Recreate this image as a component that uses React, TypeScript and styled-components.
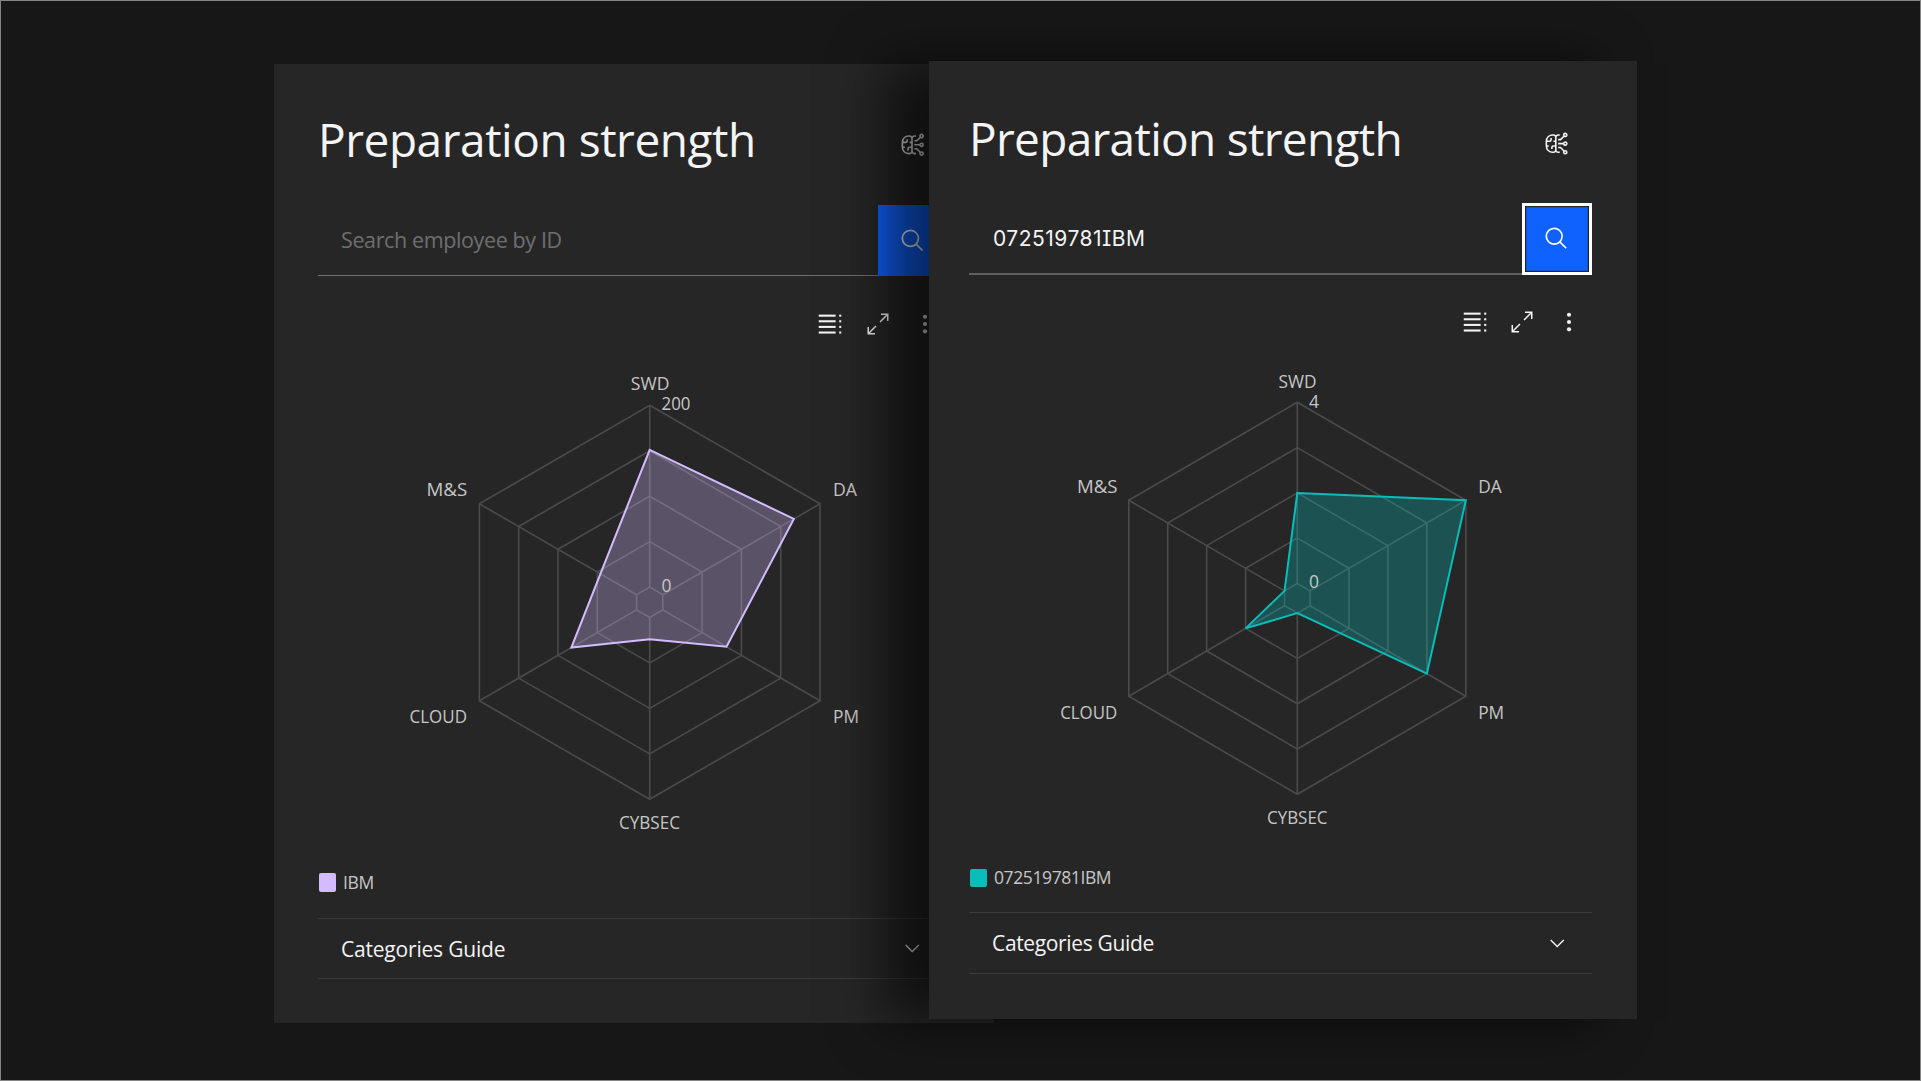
import React from "react";
import styled, { createGlobalStyle } from "styled-components";

const GlobalStyle = createGlobalStyle`
  * { box-sizing: border-box; }
  body { margin: 0; background: #171717; }
  h1 { margin: 0; }
`;

const sans = `"Open Sans", "Noto Sans", sans-serif`;

interface Metrics {
  top: number;
  width: number;
  height: number;
  padLeft: number;
  content: number;
  headerHeight: number;
  titleTop: number;
  titleSpacing: string;
  searchHeight: number;
  searchLine: string;
  buttonWidth: number;
  toolbarHeight: number;
  toolbarWidth: number;
  toolWidth: number;
  chartHeight: number;
  legendHeight: number;
  swatchHeight: number;
  guideHeight: number;
  guideSpacing: string;
  icon: number;
}

interface ChartData {
  cx: number;
  cy: number;
  rx: number;
  ry: number;
  hole: number;
  max: number;
  values: number[];
  labelSize: number;
  labels: Label[];
}

interface Label {
  text: string;
  x: number;
  y: number;
  width: number;
}

const Page = styled.main`
  width: 1921px;
  height: 1081px;
  padding-left: 273px;
  border: 1px solid #858585;
  background: #171717;
  display: flex;
  align-items: flex-start;
  overflow: hidden;
  font-family: ${sans};
`;

const Card = styled.section<{ $m: Metrics; $front?: boolean }>`
  flex: none;
  display: flex;
  flex-direction: column;
  width: ${(p) => p.$m.width}px;
  height: ${(p) => p.$m.height}px;
  margin-top: ${(p) => p.$m.top - 1}px;
  margin-left: ${(p) => (p.$front ? "-65px" : "0")};
  padding-left: ${(p) => p.$m.padLeft}px;
  background: #262626;
  z-index: ${(p) => (p.$front ? 1 : 0)};
  box-shadow: ${(p) => (p.$front ? "-44px 2px 50px rgba(0, 0, 0, 0.6)" : "none")};
`;

const Header = styled.header<{ $m: Metrics }>`
  display: flex;
  justify-content: space-between;
  width: ${(p) => p.$m.content}px;
  height: ${(p) => p.$m.headerHeight}px;
  padding-top: ${(p) => p.$m.titleTop}px;
`;

const Title = styled.h1<{ $m: Metrics }>`
  color: #f4f4f4;
  font-size: 46px;
  line-height: 64px;
  font-weight: 450;
  letter-spacing: ${(p) => p.$m.titleSpacing};
  white-space: nowrap;
`;

const HeaderIcon = styled.span<{ $m: Metrics }>`
  display: flex;
  justify-content: center;
  width: ${(p) => p.$m.buttonWidth}px;
  padding-top: 25px;
  color: #f4f4f4;
`;

const Search = styled.div<{ $m: Metrics }>`
  display: flex;
  width: ${(p) => p.$m.content}px;
  height: ${(p) => p.$m.searchHeight}px;
`;

const Field = styled.div<{ $m: Metrics }>`
  flex: 1;
  display: flex;
  align-items: center;
  padding-left: 23px;
  border-bottom: ${(p) => p.$m.searchLine};
`;

const Placeholder = styled.span`
  padding-bottom: 2px;
  color: #6f6f6f;
  font-size: 21.5px;
  font-weight: 450;
  letter-spacing: -0.38px;
`;

const Value = styled.span`
  padding-left: 1px;
  color: #f4f4f4;
  font-family: Inter, ${sans};
  font-feature-settings: "cv08" 1;
  font-size: 21px;
  letter-spacing: 0.5px;
`;

const SearchButton = styled.button<{ $m: Metrics; $focused?: boolean }>`
  display: flex;
  align-items: center;
  justify-content: center;
  width: ${(p) => p.$m.buttonWidth}px;
  padding: 0;
  border: ${(p) => (p.$focused ? "3px solid #ffffff" : "0")};
  box-shadow: ${(p) => (p.$focused ? "inset 0 0 0 1.3px #262626" : "none")};
  background: #0f62fe;
  color: #ffffff;
`;

const Toolbar = styled.div<{ $m: Metrics }>`
  display: flex;
  justify-content: flex-end;
  align-items: center;
  width: ${(p) => p.$m.toolbarWidth}px;
  height: ${(p) => p.$m.toolbarHeight}px;
  color: #f4f4f4;
`;

const Tool = styled.span<{ $m: Metrics }>`
  display: flex;
  justify-content: center;
  width: ${(p) => p.$m.toolWidth}px;
`;

const Chart = styled.svg`
  flex: none;
  display: block;
  text {
    fill: #c6c6c6;
    font-family: ${sans};
  }
`;

const Legend = styled.div<{ $m: Metrics }>`
  display: flex;
  align-items: center;
  gap: 7px;
  height: ${(p) => p.$m.legendHeight}px;
  padding-left: 1px;
  color: #c6c6c6;
  font-size: 17.5px;
`;

const Swatch = styled.i<{ $m: Metrics; $color: string }>`
  width: 17px;
  height: ${(p) => p.$m.swatchHeight}px;
  border-radius: 2px;
  background: ${(p) => p.$color};
`;

const LegendText = styled.span`
  padding-bottom: 1px;
  letter-spacing: -0.4px;
`;

const Guide = styled.div<{ $m: Metrics }>`
  display: flex;
  align-items: center;
  justify-content: space-between;
  width: ${(p) => p.$m.content}px;
  height: ${(p) => p.$m.guideHeight}px;
  padding: 0 24px 0 23px;
  border: solid #3a3a3a;
  border-width: 1px 0;
  color: #f4f4f4;
  font-size: 21px;
`;

const GuideText = styled.span<{ $m: Metrics }>`
  font-weight: 450;
  letter-spacing: ${(p) => p.$m.guideSpacing};
`;

function BrainIcon({ size }: { size: number }) {
  return (
    <svg width={size} height={size} viewBox="0 0 32 32" fill="currentColor">
      <path d="M27,24a2.9609,2.9609,0,0,0-1.2854.3008L21.4141,20H18v2h2.5859l3.7146,3.7148A2.9665,2.9665,0,0,0,24,27a3,3,0,1,0,3-3Zm0,4a1,1,0,1,1,1-1A1.0009,1.0009,0,0,1,27,28Z" />
      <path d="M27,13a2.9948,2.9948,0,0,0-2.8157,2H18v2h6.1843A2.9947,2.9947,0,1,0,27,13Zm0,4a1,1,0,1,1,1-1A1.0009,1.0009,0,0,1,27,17Z" />
      <path d="M27,2a3.0033,3.0033,0,0,0-3,3,2.9657,2.9657,0,0,0,.3481,1.373L20.5957,10H18v2h3.4043l4.3989-4.2524A2.9987,2.9987,0,1,0,27,2Zm0,4a1,1,0,1,1,1-1A1.0009,1.0009,0,0,1,27,6Z" />
      <path d="M18,6h2V4H18a3.9756,3.9756,0,0,0-3,1.3823A3.9756,3.9756,0,0,0,12,4H11a9.01,9.01,0,0,0-9,9v6a9.01,9.01,0,0,0,9,9h1a3.9756,3.9756,0,0,0,3-1.3823A3.9756,3.9756,0,0,0,18,28h2V26H18a2.0023,2.0023,0,0,1-2-2V8A2.0023,2.0023,0,0,1,18,6ZM12,26H11a7.0047,7.0047,0,0,1-6.92-6H6V18H4V14H7a3.0033,3.0033,0,0,0,3-3V9H8v2a1.0009,1.0009,0,0,1-1,1H4.08A7.0047,7.0047,0,0,1,11,6h1a2.0023,2.0023,0,0,1,2,2v4H12v2h2v4H12a3.0033,3.0033,0,0,0-3,3v2h2V21a1.0009,1.0009,0,0,1,1-1h2v4A2.0023,2.0023,0,0,1,12,26Z" />
    </svg>
  );
}

function SearchIcon({ size }: { size: number }) {
  return (
    <svg width={size} height={size} viewBox="0 0 32 32" fill="currentColor">
      <path d="M29,27.5859l-7.5521-7.5521a11.0177,11.0177,0,1,0-1.4141,1.4141L27.5859,29ZM4,13a9,9,0,1,1,9,9A9.01,9.01,0,0,1,4,13Z" />
    </svg>
  );
}

function TableIcon() {
  return (
    <svg width="30" height="30" viewBox="0 0 32 32" fill="currentColor">
      {[6, 12, 18, 24].map((y) => (
        <React.Fragment key={y}>
          <rect x="4" y={y} width="18" height="2.2" />
          <rect x="25.8" y={y} width="2.2" height="2.2" />
        </React.Fragment>
      ))}
    </svg>
  );
}

function ExpandIcon() {
  return (
    <svg width="24" height="24" viewBox="0 0 32 32" fill="currentColor">
      <path d="M20 2v2h6.586L18 12.582 19.414 14 28 5.414V12h2V2zM14 19.416 12.592 18 4 26.586V20H2v10h10v-2H5.414z" />
    </svg>
  );
}

function OverflowIcon() {
  return (
    <svg width="30" height="30" viewBox="0 0 32 32" fill="currentColor">
      <circle cx="16" cy="8.2" r="2.2" />
      <circle cx="16" cy="16" r="2.2" />
      <circle cx="16" cy="23.8" r="2.2" />
    </svg>
  );
}

function ChevronIcon() {
  return (
    <svg width="22.5" height="22.5" viewBox="0 0 16 16" fill="currentColor">
      <path d="M8 11 3 6l.7-.7L8 9.6l4.3-4.3.7.7z" />
    </svg>
  );
}

function Radar({ data, color, m }: { data: ChartData; color: string; m: Metrics }) {
  const { cx, cy, rx, ry, hole, max, values } = data;
  // Point on spoke i at t, where 0 is the inner ring and 1 the outer one.
  const point = (i: number, t: number): [number, number] => {
    const a = (i * Math.PI) / 3;
    const k = hole + t * (1 - hole);
    return [cx + rx * k * Math.sin(a), cy - ry * k * Math.cos(a)];
  };
  const spokes = [0, 1, 2, 3, 4, 5];
  const ring = (t: number) => spokes.map((i) => point(i, t).join(",")).join(" ");
  return (
    <Chart width={m.content} height={m.chartHeight}>
      <g fill="none" stroke="#4b4b4b" strokeWidth="1.6">
        {[0, 0.25, 0.5, 0.75, 1].map((t) => (
          <polygon key={t} points={ring(t)} />
        ))}
        {spokes.map((i) => {
          const [x1, y1] = point(i, 0);
          const [x2, y2] = point(i, 1);
          return <line key={i} x1={x1} y1={y1} x2={x2} y2={y2} />;
        })}
      </g>
      <polygon
        points={values.map((v, i) => point(i, v / max).join(",")).join(" ")}
        fill={color}
        fillOpacity="0.3"
        stroke={color}
        strokeWidth="2"
      />
      {data.labels.map((l) => (
        <text
          key={l.text}
          x={l.x}
          y={l.y}
          fontSize={data.labelSize}
          textLength={l.width}
          lengthAdjust="spacingAndGlyphs"
        >
          {l.text}
        </text>
      ))}
    </Chart>
  );
}

interface PanelProps {
  m: Metrics;
  data: ChartData;
  color: string;
  legend: string;
  query?: string;
  front?: boolean;
}

function Panel({ m, data, color, legend, query, front }: PanelProps) {
  return (
    <Card $m={m} $front={front}>
      <Header $m={m}>
        <Title $m={m}>Preparation strength</Title>
        <HeaderIcon $m={m}>
          <BrainIcon size={m.icon} />
        </HeaderIcon>
      </Header>
      <Search $m={m}>
        <Field $m={m}>
          {query ? <Value>{query}</Value> : <Placeholder>Search employee by ID</Placeholder>}
        </Field>
        <SearchButton $m={m} $focused={front} aria-label="Search">
          <SearchIcon size={m.icon} />
        </SearchButton>
      </Search>
      <Toolbar $m={m}>
        <Tool $m={m}><TableIcon /></Tool>
        <Tool $m={m}><ExpandIcon /></Tool>
        <Tool $m={m}><OverflowIcon /></Tool>
      </Toolbar>
      <Radar data={data} color={color} m={m} />
      <Legend $m={m}>
        <Swatch $m={m} $color={color} />
        <LegendText>{legend}</LegendText>
      </Legend>
      <Guide $m={m}>
        <GuideText $m={m}>Categories Guide</GuideText>
        <ChevronIcon />
      </Guide>
    </Card>
  );
}

const backMetrics: Metrics = {
  top: 64, width: 720, height: 959, padLeft: 44, content: 629,
  headerHeight: 141, titleTop: 43, titleSpacing: "-0.46px",
  searchHeight: 71, searchLine: "1px solid #6f6f6f", buttonWidth: 69,
  toolbarHeight: 96, toolbarWidth: 631, toolWidth: 47.5, chartHeight: 475,
  legendHeight: 71, swatchHeight: 19, guideHeight: 61, guideSpacing: "-0.2px", icon: 25.6,
};

const frontMetrics: Metrics = {
  top: 61, width: 708, height: 958, padLeft: 40, content: 623,
  headerHeight: 142, titleTop: 45, titleSpacing: "-0.7px",
  searchHeight: 72, searchLine: "2px solid #606060", buttonWidth: 70,
  toolbarHeight: 94, toolbarWidth: 623, toolWidth: 47, chartHeight: 474,
  legendHeight: 69, swatchHeight: 18, guideHeight: 62, guideSpacing: "-0.35px", icon: 25.2,
};

const backData: ChartData = {
  cx: 331.7, cy: 230.3, rx: 196.7, ry: 197, hole: 0.077,
  max: 200, values: [151, 166.7, 81, 24, 83, 46], labelSize: 17.8,
  labels: [
    { text: "SWD", x: 312.8, y: 18.3, width: 38.6 },
    { text: "200", x: 343.5, y: 38.3, width: 29 },
    { text: "0", x: 343.5, y: 220.3, width: 10 },
    { text: "DA", x: 515, y: 124, width: 24 },
    { text: "PM", x: 515, y: 350.7, width: 26 },
    { text: "CYBSEC", x: 301, y: 457, width: 61 },
    { text: "CLOUD", x: 91.5, y: 350.7, width: 57.5 },
    { text: "M&S", x: 108.5, y: 124, width: 40.8 },
  ],
};

const frontData: ChartData = {
  cx: 328.3, cy: 229.3, rx: 194.6, ry: 196, hole: 0.0757,
  max: 4, values: [2, 4, 3, 0, 1, 0], labelSize: 17.6,
  labels: [
    { text: "SWD", x: 309.5, y: 18.5, width: 38 },
    { text: "4", x: 340, y: 38.7, width: 10 },
    { text: "0", x: 340, y: 219.3, width: 10 },
    { text: "DA", x: 509.2, y: 124, width: 23.5 },
    { text: "PM", x: 509.2, y: 350, width: 26 },
    { text: "CYBSEC", x: 298, y: 455, width: 60.5 },
    { text: "CLOUD", x: 91.2, y: 350, width: 57 },
    { text: "M&S", x: 108, y: 124, width: 40.5 },
  ],
};

export default function App() {
  return (
    <>
      <GlobalStyle />
      <Page>
        <Panel m={backMetrics} data={backData} color="#d4bbff" legend="IBM" />
        <Panel
          front
          m={frontMetrics}
          data={frontData}
          color="#08bdba"
          legend="072519781IBM"
          query="072519781IBM"
        />
      </Page>
    </>
  );
}
